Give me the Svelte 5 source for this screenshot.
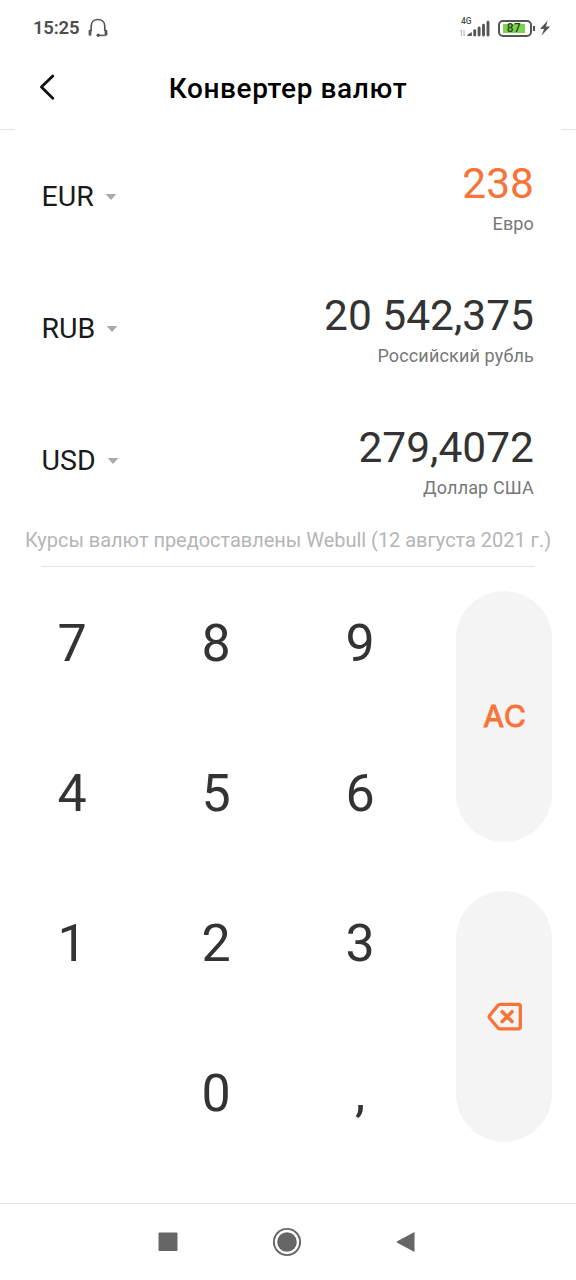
<script>
	const rates = [
		{ code: 'EUR', amount: '238', name: 'Евро', active: true },
		{ code: 'RUB', amount: '20 542,375', name: 'Российский рубль', active: false },
		{ code: 'USD', amount: '279,4072', name: 'Доллар США', active: false }
	];

	const keys = ['7', '8', '9', '4', '5', '6', '1', '2', '3', '', '0', ','];
</script>

<div class="screen">
	<div class="status">
		<span class="time">15:25</span>
		<svg class="headset" width="20" height="20" viewBox="0 0 20 20" fill="none" stroke="#555">
			<path d="M3.2 13V8.2C3.2 4 6 1.5 10 1.5S16.8 4 16.8 8.2V13" stroke-width="1.7" />
			<path d="M2 13.2v3.2M18 13.2v3.2" stroke-width="2.8" stroke-linecap="round" />
			<path d="M17 17.4H10.5" stroke-width="1.5" />
			<circle cx="10.2" cy="17.2" r="1.7" fill="#555" stroke="none" />
		</svg>
		<div class="status-right">
			<div class="signal">
				<span class="network">4G</span>
				<svg width="31" height="18" viewBox="0 0 31 18">
					<path d="M2.4 17v-6M1.2 12.4L2.4 11M5 11v6M5 16.8l1.2-1.4" fill="none" stroke="#aaa" stroke-width=".9" />
					<path d="M8.4 17v-1.2l4.4-2.7V17z" fill="#555" />
					<path d="M15.7 16v-4.2M20.1 16V9M24.5 16V6.2M29 16V3.2" stroke="#555" stroke-width="2.9" stroke-linecap="round" />
				</svg>
			</div>
			<div class="battery"><span>87</span></div>
			<svg class="bolt" width="12" height="18" viewBox="0 0 12 18">
				<path d="M8.6 1.6L1 10h4L2.6 16.6 11.2 7.6H7z" fill="#555" />
			</svg>
		</div>
	</div>

	<header>
		<svg class="back" width="20" height="28" viewBox="0 0 20 28">
			<path d="M16.8 3L5.4 14.1 16.8 25.2" fill="none" stroke="#111" stroke-width="2.8" stroke-linecap="round" stroke-linejoin="round" />
		</svg>
		<h1>Конвертер валют</h1>
	</header>

	<div class="rates">
		{#each rates as rate}
			<div class="rate">
				<div class="currency">
					<span>{rate.code}</span>
					<svg width="12" height="6" viewBox="0 0 12 6"><path d="M.6 0h10.8L6 6z" fill="#aaa" /></svg>
				</div>
				<div class="value">
					<div class="amount" class:active={rate.active}>{rate.amount}</div>
					<div class="name">{rate.name}</div>
				</div>
			</div>
		{/each}
	</div>
	<p class="note">Курсы валют предоставлены Webull (12 августа 2021 г.)</p>

	<div class="keypad">
		<div class="digits">
			{#each keys as key}
				<div class="key">{key}</div>
			{/each}
		</div>
		<div class="actions">
			<div class="action clear"><span>AC</span></div>
			<div class="action erase">
				<svg width="36" height="30" viewBox="0 0 36 30" fill="none" stroke="#f87338" stroke-linecap="round" stroke-linejoin="round">
					<path d="M13 2.4H31.5Q33.3 2.4 33.3 4.2V25Q33.3 26.8 31.5 26.8H13Q11.8 26.8 11 26L2.8 16.2Q1.6 14.7 2.8 13.2L11 3.4Q11.8 2.4 13 2.4Z" stroke-width="3.3" />
					<path d="M15.2 9.7l9.8 9.8M25 9.7l-9.8 9.8" stroke-width="3.6" />
				</svg>
			</div>
		</div>
	</div>

	<nav>
		<svg width="20" height="20" viewBox="0 0 20 20"><rect x=".5" y=".5" width="19" height="18.6" rx="1" fill="#666" /></svg>
		<svg width="30" height="30" viewBox="0 0 30 30">
			<circle cx="15" cy="15" r="13.1" fill="none" stroke="#666" stroke-width="1.9" />
			<circle cx="15" cy="15" r="9.8" fill="#666" />
		</svg>
		<svg width="20" height="22" viewBox="0 0 20 22"><path d="M18.5 1v20L.8 11.4Q.2 11 .8 10.6z" fill="#666" /></svg>
	</nav>
</div>

<style>
	:global(body) {
		margin: 0;
		background: #fff;
	}

	.screen {
		width: 576px;
		height: 1280px;
		display: flex;
		flex-direction: column;
		background: #fff;
		font-family: Roboto, 'Liberation Sans', sans-serif;
		overflow: hidden;
	}

	.status {
		height: 56px;
		display: flex;
		align-items: center;
		padding: 0 25px 0 33px;
		box-sizing: border-box;
		color: #4d4d4d;
	}

	.time {
		font-size: 18.5px;
		font-weight: 600;
		letter-spacing: -0.2px;
	}

	.headset {
		margin-left: 9px;
	}

	.status-right {
		display: flex;
		align-items: center;
		margin-left: auto;
	}

	.signal {
		position: relative;
		height: 18px;
	}

	.network {
		position: absolute;
		top: -2px;
		left: 2px;
		font-size: 8.5px;
		line-height: 9px;
		font-weight: 500;
	}

	.battery {
		position: relative;
		width: 34px;
		height: 17px;
		box-sizing: border-box;
		margin: 0 7px 0 8px;
		padding: 2px;
		border: 2px solid #555;
		border-radius: 5px;
	}

	.battery::after {
		content: '';
		position: absolute;
		right: -5px;
		top: 4px;
		width: 2px;
		height: 5px;
		background: #555;
	}

	.battery span {
		display: block;
		width: 22px;
		margin-left: 1px;
		height: 9px;
		background: #7bd34e;
		color: #264a16;
		font-size: 12px;
		font-weight: 500;
		letter-spacing: 0.5px;
		line-height: 9px;
		text-align: center;
	}

	header {
		position: relative;
		height: 74px;
		box-sizing: border-box;
		display: flex;
		justify-content: center;
		padding-top: 16px;
		/* the rule under the title only shows at both edges */
		background: linear-gradient(to right, #e2e2e2 15px, #fff 15px, #fff 561px, #e2e2e2 561px) bottom / 100% 1px no-repeat;
	}

	.back {
		position: absolute;
		left: 36px;
		top: 17px;
	}

	h1 {
		margin: 0;
		font-size: 28px;
		line-height: 34px;
		font-weight: 500;
		letter-spacing: 0.6px;
		color: #000;
	}

	.rate {
		height: 132px;
		box-sizing: border-box;
		display: flex;
		justify-content: space-between;
		padding: 0 42px 0 41.5px;
	}

	.currency {
		display: flex;
		align-items: center;
		gap: 11px;
		padding-top: 1px;
		font-size: 28.5px;
		color: #1a1a1a;
	}

	.value {
		padding-top: 29px;
		text-align: right;
	}

	.amount {
		font-size: 42.5px;
		line-height: 50px;
		color: #333;
	}

	.amount.active {
		color: #f87338;
	}

	.name {
		font-size: 18px;
		line-height: 30px;
		letter-spacing: 0.15px;
		color: #777;
	}

	.note {
		margin: 0 41px;
		height: 40px;
		display: flex;
		justify-content: center;
		border-bottom: 1px solid #e2e2e2;
		font-size: 20px;
		line-height: 28px;
		letter-spacing: -0.03px;
		color: #b5b5b5;
		white-space: nowrap;
	}

	.keypad {
		height: 600px;
		margin-top: 1px;
		display: flex;
	}

	.digits {
		width: 432px;
		display: grid;
		grid-template-columns: repeat(3, 1fr);
		grid-template-rows: repeat(4, 150px);
	}

	.key {
		display: flex;
		justify-content: center;
		align-items: center;
		font-size: 52px;
		color: #333;
	}

	.actions {
		width: 144px;
		padding: 23px 0;
		box-sizing: border-box;
		display: flex;
		flex-direction: column;
		align-items: center;
		gap: 49px;
	}

	.action {
		width: 96px;
		height: 251px;
		display: flex;
		justify-content: center;
		align-items: center;
		box-sizing: border-box;
		border-radius: 48px;
		background: #f4f4f4;
	}

	.clear {
		padding: 0 0 1px 2px;
		font-family: Inter, sans-serif;
		font-size: 30px;
		letter-spacing: 1px;
		color: #f87338;
		-webkit-text-stroke: 1px #f87338;
		stroke-linejoin: round;
	}

	.erase {
		padding-left: 2px;
	}

	nav {
		height: 77px;
		margin-top: auto;
		box-sizing: border-box;
		display: flex;
		justify-content: center;
		align-items: center;
		gap: 94px;
		padding-right: 2px;
		border-top: 1px solid #e2e2e2;
	}
</style>
